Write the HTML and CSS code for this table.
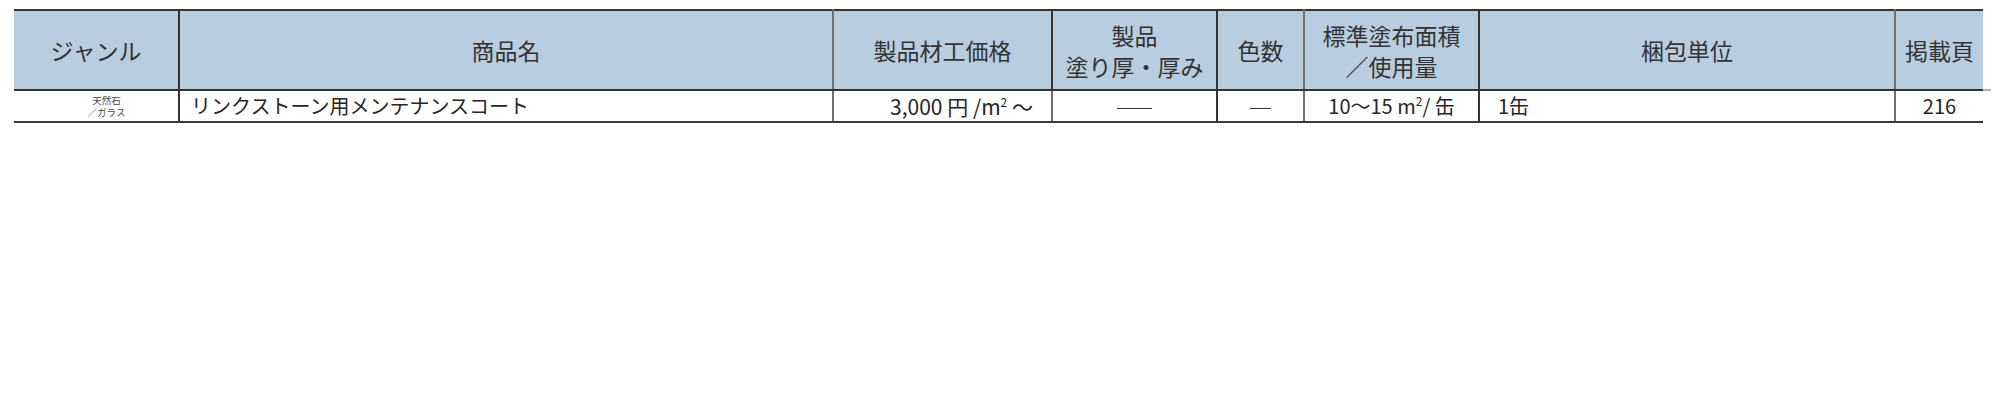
FILE: index.html
```html
<!DOCTYPE html>
<html lang="ja">
<head>
<meta charset="utf-8">
<title>製品一覧</title>
<link rel="stylesheet" href="styles.css">
</head>
<body>
<table class="spec">
  <colgroup>
    <col class="c-genre">
    <col class="c-name">
    <col class="c-price">
    <col class="c-thick">
    <col class="c-colors">
    <col class="c-area">
    <col class="c-pack">
    <col class="c-page">
  </colgroup>
  <thead>
    <tr>
      <th class="b-dark">ジャンル</th>
      <th class="b-gray">商品名</th>
      <th class="b-dark">製品材工価格</th>
      <th class="b-dark two">製品<br>塗り厚・厚み</th>
      <th class="b-gray">色数</th>
      <th class="b-dark two">標準塗布面積<br>／使用量</th>
      <th class="b-gray">梱包単位</th>
      <th class="last">掲載頁</th>
    </tr>
  </thead>
  <tbody>
    <tr>
      <td class="genre b-dark"><span class="g-line">天然石</span><span class="g-line">／ガラス</span></td>
      <td class="name b-gray">リンクストーン用メンテナンスコート</td>
      <td class="price b-gray">3,000 円 /m<sup>2</sup> ～</td>
      <td class="center b-dark"><span class="dash dash-long"></span></td>
      <td class="center b-gray"><span class="dash dash-short"></span></td>
      <td class="center b-dark area">10～15 m<sup>2</sup>/ 缶</td>
      <td class="pack b-gray">1缶</td>
      <td class="center">216</td>
    </tr>
  </tbody>
</table>
</body>
</html>
```

FILE: styles.css
```css
html, body {
  margin: 0;
  padding: 0;
  background: #ffffff;
}

body {
  font-family: "Noto Sans CJK JP", "Noto Sans", sans-serif;
  color: #2b2b2b;
}

.spec {
  margin: 9px 0 0 14px;
  width: 1969px;
  border-collapse: collapse;
  table-layout: fixed;
}

.c-genre { width: 165px; }
.c-name { width: 654px; }
.c-price { width: 219px; }
.c-thick { width: 165px; }
.c-colors { width: 87px; }
.c-area { width: 175px; }
.c-pack { width: 416px; }
.c-page { width: 88px; }

.spec thead th {
  background: #b8cde0;
  height: 76px;
  padding: 0;
  font-weight: 400;
  font-size: 23px;
  line-height: 31px;
  color: #333333;
  text-align: center;
  vertical-align: middle;
  border-top: 2px solid #333333;
  border-bottom: 2px solid #333333;
}

.spec thead th.two {
  padding-top: 2px;
}

.spec thead th.last {
  position: relative;
}

.spec thead th.last::after {
  content: "";
  position: absolute;
  left: 100%;
  bottom: -2px;
  width: 8px;
  height: 2px;
  background: #b0b0b0;
}

.spec tbody td {
  height: 30px;
  padding: 0;
  font-size: 20px;
  line-height: 24px;
  color: #262626;
  vertical-align: middle;
  border-bottom: 2px solid #3a3a3a;
  white-space: nowrap;
}

.b-dark { border-right: 2px solid #333333; }
.b-gray { border-right: 2px solid #707070; }

.spec tbody td.genre {
  padding-left: 21px;
  text-align: center;
  color: #444444;
}

.g-line {
  display: block;
  font-size: 9.5px;
  line-height: 12px;
}

.spec tbody td.name {
  padding-left: 11px;
}

.spec tbody td.price {
  font-size: 21px;
  text-align: right;
  padding-right: 18px;
}

.spec tbody td.pack {
  padding-left: 18px;
}

.center {
  text-align: center;
}

.dash {
  display: inline-block;
  height: 1px;
  background: #333333;
  vertical-align: middle;
}

.dash-long { width: 35px; }
.dash-short { width: 21px; }

sup {
  font-size: 12px;
  line-height: 0;
  vertical-align: 8px;
}
```
